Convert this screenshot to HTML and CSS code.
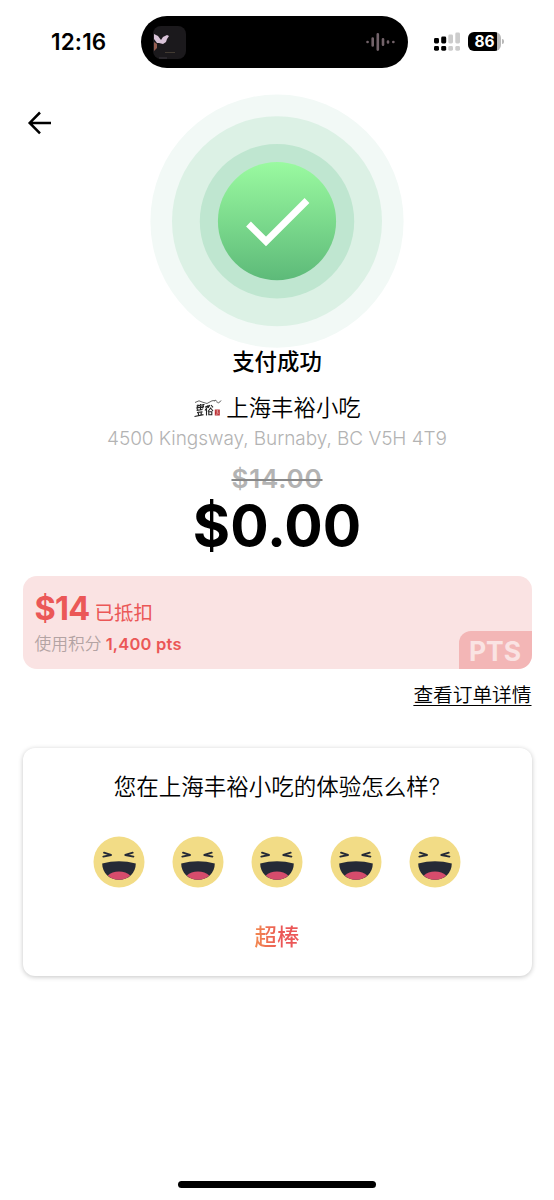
FILE: index.html
```html
<!DOCTYPE html>
<html lang="zh-CN">
<head>
<meta charset="utf-8">
<title>支付成功</title>
<link rel="stylesheet" href="styles.css">
</head>
<body>
<svg class="defs" width="0" height="0" aria-hidden="true">
  <symbol id="laugh" viewBox="0 0 52 52">
    <circle cx="26" cy="26" r="25.5" fill="#f2dc86"/>
    <path d="M9.2 27.5Q26 22.8 42.8 27.5C42.8 37 35.5 43.8 26 43.8S9.2 37 9.2 27.5Z" fill="#252a36"/>
    <path d="M14.8 39.5Q19 35.6 26 35.6T37.2 39.5Q32.4 43.8 26 43.8T14.8 39.5Z" fill="#d64c6c"/>
    <path d="M11 16.7L18 19 10.3 20.6M39.7 16.7L32.3 19 40.4 20.6" fill="none" stroke="#252a36" stroke-width="1.9" stroke-linecap="round" stroke-linejoin="round"/>
  </symbol>
</svg>
<header class="status">
  <span class="time">12:16</span>
  <div class="island">
    <svg class="album" width="33" height="33" viewBox="0 0 33 33">
      <rect width="33" height="33" rx="8" fill="#1b191c"/>
      <path d="M1 8l4 2 3 4 2-3 4-2 2 1-2 3-1 3-3 2-4-1-2 0-3-4z" fill="#d9c3d8"/>
      <path d="M1 16l3 2 0 4-3 3z" fill="#955d51"/>
      <path d="M12 26.5h10" stroke="#4c4439" stroke-width=".8"/>
      <path d="M6 32h8" stroke="#3c393e"/>
    </svg>
    <svg class="wave" width="30" height="20" viewBox="0 0 30 20" stroke="#73636a" stroke-width="2.6" stroke-linecap="round">
      <path d="M2.5 10h.1M23 9.5v1M28.3 10h.1"/><path d="M7.7 6.6v6.8M12.8 2.4v15.2M18 7.2v5.6"/>
    </svg>
  </div>
  <svg class="signal" width="27" height="20" viewBox="0 0 27 20">
    <g fill="#000"><rect x="0" y="6" width="5" height="5.5" rx="1.4"/><rect x="7.2" y="4.6" width="5" height="6.9" rx="1.4"/><rect x="0" y="14" width="5" height="4.7" rx="1.4"/><rect x="7.2" y="14" width="5" height="4.7" rx="1.4"/></g>
    <g fill="#ccc"><rect x="14.3" y="2.5" width="4.7" height="9" rx="1.4"/><rect x="21.3" y=".5" width="4.7" height="11" rx="1.4"/><rect x="14.3" y="14" width="4.7" height="4.7" rx="1.4"/><rect x="21.3" y="14" width="4.7" height="4.7" rx="1.4"/></g>
  </svg>
  <div class="battery">86</div><i class="nub"></i>
</header>

<section class="hero">
  <svg class="back" width="26" height="26" viewBox="0 0 26 26" fill="none" stroke="#000" stroke-width="2.5"><path d="M13 2.5L2.7 12.9 13 23.3M3 12.9h21"/></svg>
  <svg class="rings" width="254" height="254" viewBox="0 0 254 254">
    <defs><linearGradient id="green" x2="0" y2="1"><stop stop-color="#9afaa0"/><stop offset="1" stop-color="#5dba79"/></linearGradient></defs>
    <circle cx="127" cy="127.2" r="126.6" fill="#f2f9f6"/>
    <circle cx="127" cy="127.2" r="105" fill="#dcf1e5"/>
    <circle cx="127" cy="127.2" r="77.2" fill="#bfe6d0"/>
    <circle cx="127" cy="127.2" r="59.1" fill="url(#green)"/>
    <path d="M98.5 130L116 147.5 157 106.5" fill="none" stroke="#fff" stroke-width="6.8"/>
  </svg>
</section>

<main>
  <h1 class="title">支付成功</h1>
  <div class="shop">
    <svg width="29" height="20" viewBox="0 0 29 20" fill="none" stroke="#222">
      <path d="M2 4.5L6 2.8 9 4l5 1.5L19 2.8 23 2.4" stroke-width=".7"/><path d="M21 3.5q2-3 3 0t4-1q-2 4-5 1" stroke-width=".7" stroke="#777"/>
      <path d="M3.5 8l8-1.5M5 6.5l-.6 5M7.5 6v5.5M10.5 6l-.8 4.5M3 10l8-1.4M3.6 12.3l6-.8M4 14.5l5.5-.6M1.5 18.5l9-1.8M5 14l.8 3.5M8.6 13.5l-.8 3.8" stroke-width="1.2"/>
      <path d="M12 9.3l3.5-1.8-3.5 5M13.5 10v7.5M16.8 7l-1.6 3M18 7l2 2.3M18 9.5l-3 4M18 10.5l2 2.5M15.8 13.8h3v3h-3z" stroke-width="1.1"/>
      <path d="M21.8 11.5h5v6h-5z" fill="#b92c31" stroke="none"/><path d="M22.6 13h3M23 15h3M24.5 12v3M22.6 16.7l3-1" stroke="#f0c6c6" stroke-width=".5"/>
    </svg>
    <span>上海丰裕小吃</span>
  </div>
  <p class="address">4500 Kingsway, Burnaby, BC V5H 4T9</p>
  <p class="was"><span>$14.00</span></p>
  <p class="total"><span>$0.00</span></p>

  <section class="points">
    <div class="deduct"><b>$14</b><span>已抵扣</span></div>
    <div class="used"><span>使用积分</span><b>1,400 pts</b></div>
    <div class="tag">PTS</div>
  </section>
  <a class="details">查看订单详情</a>

  <section class="rating">
    <h2>您在上海丰裕小吃的体验怎么样?</h2>
    <div class="faces">
      <svg><use href="#laugh"/></svg><svg><use href="#laugh"/></svg><svg><use href="#laugh"/></svg><svg><use href="#laugh"/></svg><svg><use href="#laugh"/></svg>
    </div>
    <div class="great">超棒</div>
  </section>
</main>
<div class="home"></div>
</body>
</html>
```
FILE: styles.css
```css
* { box-sizing: border-box; margin: 0; padding: 0; }
body { width: 554px; height: 1200px; overflow: hidden; background: #fff; color: #000; font-family: Inter, "Noto Sans CJK SC", sans-serif; display: flex; flex-direction: column; }
.defs { position: absolute; }
svg { display: block; flex: none; }
.status { height: 84px; padding-top: 16px; display: flex; align-items: flex-start; flex: none; }
.time { width: 90px; margin-left: 51px; line-height: 52px; font-size: 22.5px; font-weight: 600; letter-spacing: .15px; white-space: nowrap; }
.island { width: 267px; height: 52px; border-radius: 26px; background: #000; display: flex; justify-content: space-between; align-items: center; padding: 0 13px 0 12px; }
.signal { margin: 16px 0 0 26px; }
.battery { width: 33px; height: 19px; margin: 16px 0 0 7px; border-radius: 6px; background: linear-gradient(90deg, #000 29px, #b8b8b8 29px); color: #fff; font-size: 15.5px; font-weight: 700; line-height: 19px; text-align: center; }
.nub { width: 2px; height: 5px; margin: 23px 0 0 1px; background: #b8b8b8; border-radius: 0 2px 2px 0; }
.hero { height: 264px; padding: 10px 0 0 27px; display: flex; flex: none; }
.back { margin: 16px 97px 0 0; }
main { display: flex; flex-direction: column; padding: 0 22.5px; flex: none; }
.title { height: 28px; font-size: 22.4px; font-weight: 500; line-height: 27px; text-align: center; }
.shop { height: 36px; margin-top: 14px; display: flex; justify-content: center; align-items: center; gap: 4px; font-size: 22.4px; font-weight: 350; line-height: 36px; }
.address { height: 26px; line-height: 26px; text-align: center; color: #b3b3b3; font-size: 19px; font-weight: 300; letter-spacing: -.05px; white-space: nowrap; }
.was { height: 40px; margin-top: 7px; text-align: center; line-height: 40px; font-size: 26px; font-weight: 600; letter-spacing: .8px; color: #b3b3b3; }
.was span { text-decoration: line-through; text-decoration-color: #888; text-decoration-thickness: 2px; }
.total { height: 62px; margin-top: -4px; line-height: 62px; text-align: center; font-size: 57px; font-weight: 700; }
.total span { display: inline-block; }
.points { height: 93px; margin-top: 19px; padding: 13px 12px; position: relative; border-radius: 14px; overflow: hidden; background: #fae3e3; color: #eb5757; }
.deduct { height: 40px; display: flex; align-items: baseline; gap: 5px; line-height: 40px; font-size: 19.5px; font-weight: 400; }
.deduct b { font-size: 32.5px; font-weight: 700; letter-spacing: -.8px; }
.used { height: 28px; margin-top: 1px; display: flex; align-items: baseline; gap: 4px; line-height: 28px; }
.used span { color: #b3a3a3; font-size: 16.8px; font-weight: 350; }
.used b { font-size: 16.5px; font-weight: 600; letter-spacing: .2px; }
.tag { position: absolute; right: 0; bottom: 0; width: 73px; height: 38px; border-radius: 12px 0 0 0; background: #f3b6b6; color: #fae3e3; font-size: 26.5px; font-weight: 700; line-height: 40px; text-align: center; }
.details { align-self: flex-end; height: 30px; margin-top: 11px; font-size: 19.7px; font-weight: 350; line-height: 30px; text-decoration: underline; text-decoration-thickness: 1px; text-underline-offset: 3px; }
.rating { height: 228px; margin-top: 38px; border-radius: 12px; background: #fff; box-shadow: 0 1px 5px rgba(0, 0, 0, .23); display: flex; flex-direction: column; align-items: center; }
.rating h2 { margin-top: 20px; height: 38px; font-size: 22.5px; font-weight: 350; line-height: 38px; white-space: nowrap; }
.faces { display: flex; gap: 26.8px; margin-top: 29.5px; }
.faces svg { width: 52px; height: 52px; }
.great { height: 36px; margin-top: 31.5px; line-height: 36px; font-size: 22.4px; font-weight: 500; color: transparent; background: linear-gradient(90deg, #f2884f, #eb5757 60%); background-clip: text; -webkit-background-clip: text; }
.home { width: 198px; height: 7px; border-radius: 4px; background: #000; margin: auto auto 12px; flex: none; }
```
